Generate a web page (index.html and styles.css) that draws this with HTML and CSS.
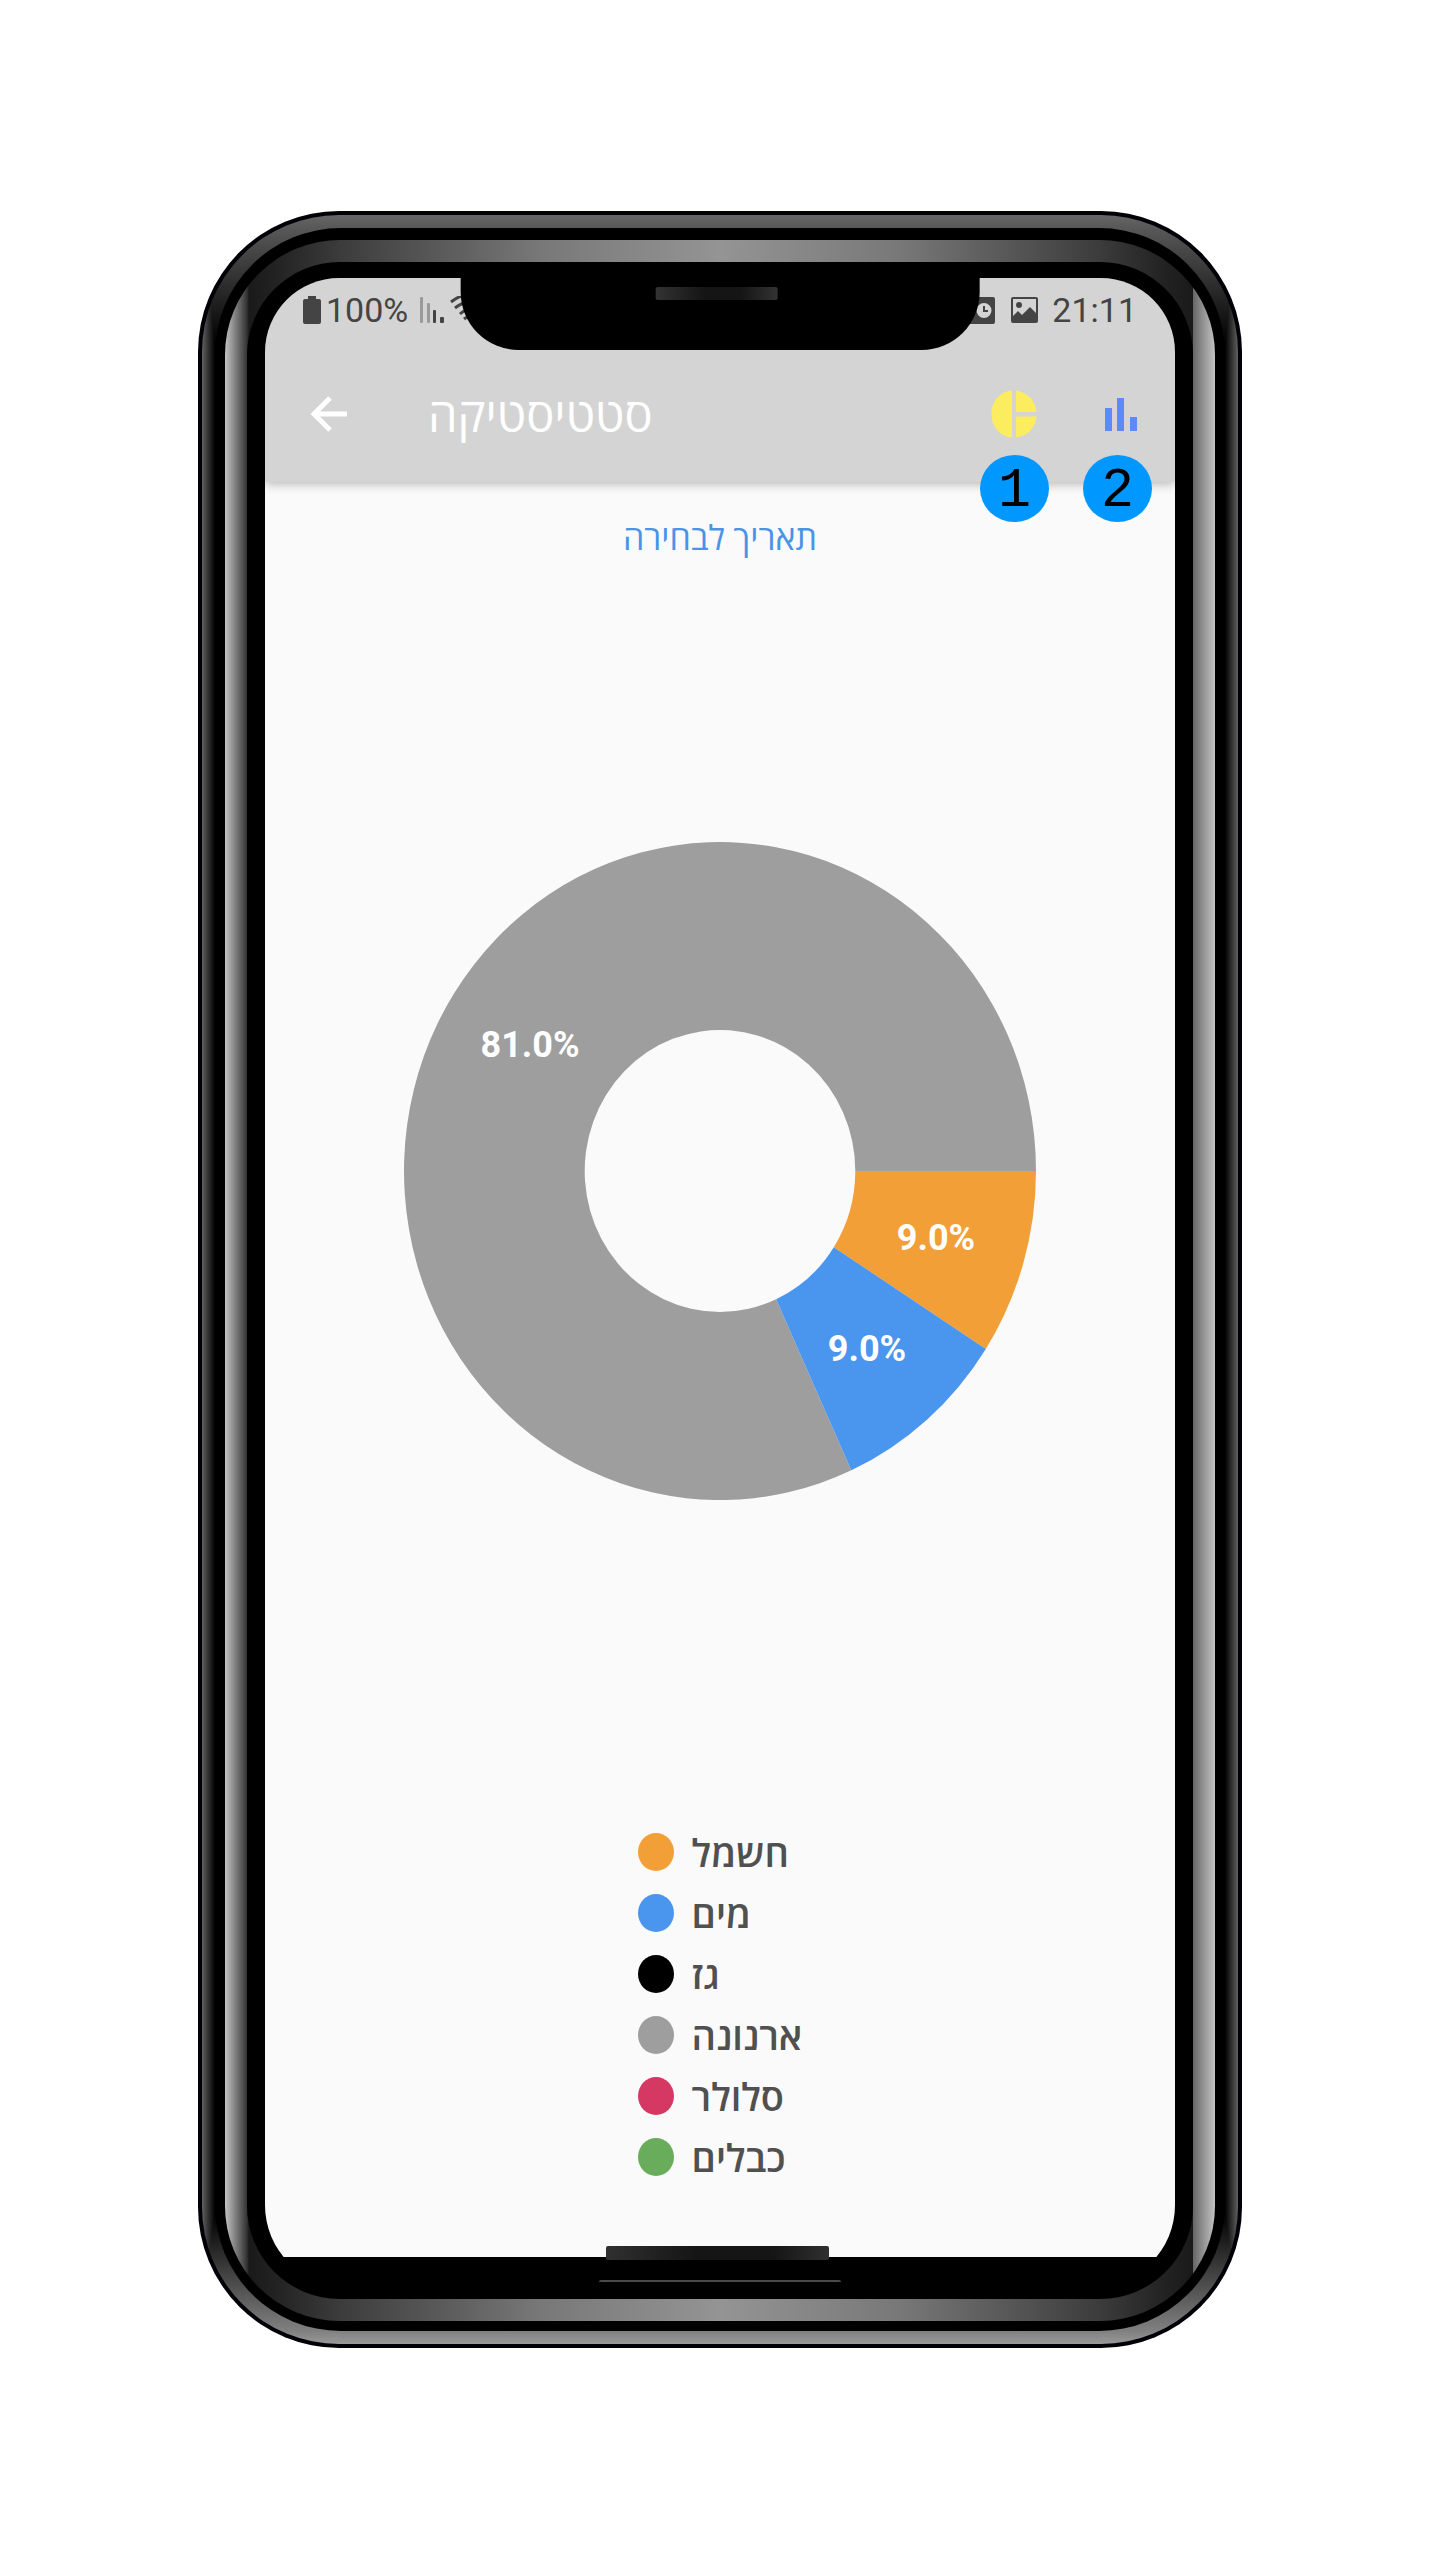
FILE: index.html
```html
<!DOCTYPE html>
<html lang="he">
<head>
<meta charset="utf-8">
<meta name="viewport" content="width=device-width, initial-scale=1">
<title>סטטיסטיקה</title>
<link rel="stylesheet" href="styles.css">
</head>
<body>
<div class="phone">
  <div class="phone-rim">
    <div class="phone-groove">
      <div class="phone-band">
        <div class="phone-bezel">
          <div class="screen">
            <header class="top">
              <div class="status">
                <div class="status-group">
                  <svg class="battery" viewBox="0 0 18 28" aria-hidden="true"><path d="M5 0h8v3h3a2 2 0 0 1 2 2v21a2 2 0 0 1-2 2H2a2 2 0 0 1-2-2V5a2 2 0 0 1 2-2h3z"/></svg>
                  <span class="status-text battery-level">100%</span>
                  <svg class="signal" viewBox="0 0 24 26" aria-hidden="true"><g opacity=".4"><rect width="3" height="26" rx="1"/><rect x="7" y="6" width="3" height="20" rx="1"/></g><rect x="13" y="13" width="3" height="13" rx="1"/><rect x="20" y="20" width="4" height="6" rx="1"/></svg>
                  <svg class="wifi" viewBox="0 0 40 28" aria-hidden="true"><g fill="none" stroke="#444" stroke-width="3"><path d="M1 6Q20-9 39 6"/><path d="M5 12Q20 0 35 12"/><path d="M10 18Q20 9 30 18"/><path d="M14 23Q20 18 26 23"/></g></svg>
                </div>
                <div class="status-group">
                  <svg class="alarm" viewBox="0 0 27 27" aria-hidden="true"><path fill-rule="evenodd" d="M2 0h23a2 2 0 0 1 2 2v23a2 2 0 0 1-2 2H2a2 2 0 0 1-2-2V2a2 2 0 0 1 2-2zm14 6a7 7 0 1 0 0 15 7 7 0 0 0 0-15z"/><path d="M15 9h2v4h3v2h-5z"/></svg>
                  <svg class="photo" viewBox="0 0 27 26" aria-hidden="true"><path fill-rule="evenodd" d="M2 0h23a2 2 0 0 1 2 2v22a2 2 0 0 1-2 2H2a2 2 0 0 1-2-2V2a2 2 0 0 1 2-2zm0 2v17l5-5 4 4 8-8 6 6V2z"/><circle cx="8" cy="8" r="3"/></svg>
                  <span class="status-text">21:11</span>
                </div>
              </div>
              <div class="toolbar">
                <button class="icon-button" type="button" aria-label="חזרה">
                  <svg viewBox="0 0 54 54"><path d="M29 11 13 27l16 16M13 27h33" fill="none" stroke="#fff" stroke-width="5"/></svg>
                </button>
                <h1 class="title" dir="rtl">סטטיסטיקה</h1>
                <div class="actions">
                  <button class="icon-button" type="button" aria-label="תרשים עוגה">
                    <svg viewBox="0 0 54 54"><path fill="#fced60" d="M25 3.500v47C13 49.500 4.500 39.500 4.500 27S13 4.500 25 3.500zM29 3.500c11 1.500 19.500 10 20.500 21.500H29zM29 29.500h20.500C48.500 41 40 49.500 29 50.500z"/></svg>
                    <span class="badge">1</span>
                  </button>
                  <button class="icon-button" type="button" aria-label="תרשים עמודות">
                    <svg viewBox="0 0 54 54"><path fill="#5a8bf8" d="M15 21h7v23h-7zM27 11h7v33h-7zM40 30h7v14h-7z"/></svg>
                    <span class="badge">2</span>
                  </button>
                </div>
              </div>
            </header>
            <main class="content">
              <button class="date" type="button" dir="rtl">תאריך לבחירה</button>
              <svg class="chart" viewBox="0 0 632 658" role="img" aria-label="81.0%, 9.0%, 9.0%">
                <path fill="#9e9e9e" d="M632 329A316 329 0 1 0 447.300 628.300L372.100 457.300A135.300 141 0 1 1 451.300 329z"/>
                <path fill="#f29f38" d="M632 329A316 329 0 0 1 581.800 506.900L429.800 405.200A135.300 141 0 0 0 451.300 329z"/>
                <path fill="#4a95ed" d="M581.800 506.900A316 329 0 0 1 447.300 628.300L372.100 457.300A135.300 141 0 0 0 429.800 405.200z"/>
                <g class="chart-label">
                  <text x="126" y="215">81.0%</text>
                  <text x="532" y="408">9.0%</text>
                  <text x="463" y="519">9.0%</text>
                </g>
              </svg>
              <ul class="legend">
                <li><span class="dot electricity"></span><span class="legend-name" dir="rtl">חשמל</span></li>
                <li><span class="dot water"></span><span class="legend-name" dir="rtl">מים</span></li>
                <li><span class="dot gas"></span><span class="legend-name" dir="rtl">גז</span></li>
                <li><span class="dot tax"></span><span class="legend-name" dir="rtl">ארנונה</span></li>
                <li><span class="dot cellular"></span><span class="legend-name" dir="rtl">סלולר</span></li>
                <li><span class="dot cable"></span><span class="legend-name" dir="rtl">כבלים</span></li>
              </ul>
            </main>
            <div class="notch"><span class="speaker"></span></div>
            <div class="home-bar"></div>
            <div class="home-line"></div>
          </div>
        </div>
      </div>
    </div>
  </div>
</div>
</body>
</html>
```
FILE: styles.css
```css
* { box-sizing: border-box; }

body {
  margin: 0;
  padding: 211px 16px;
  background: #fff;
  font-family: Roboto, "Open Sans", "Noto Sans", sans-serif;
}

button {
  padding: 0;
  border: 0;
  background: none;
  font: inherit;
  cursor: pointer;
}

svg { display: block; }

/* Device frame: nested shells, from the outer edge inwards */
.phone {
  max-width: 1044px;
  margin: 0 auto;
  padding: 4px;
  border-radius: 141px;
  background: #000006;
}

.phone-rim {
  padding: 13px;
  border-radius: 137px;
  background:
    linear-gradient(to right, #606060, #000 13px, #000 calc(100% - 13px), #606060),
    linear-gradient(#666, #585858 13px, #000 130px, #000 calc(100% - 130px), #808080 calc(100% - 13px), #999);
  background-blend-mode: lighten;
}

.phone-groove {
  padding: 12px 10px 10px;
  border-radius: 126px;
  background: #000;
}

.phone-band {
  padding: 22px;
  border-radius: 115px;
  background: linear-gradient(to right,
    #c4c4c4, #333 22px, #1a1a1a 24px, #222 50px, #3c3c3c 116px, #787878 315px,
    #949494 50%,
    #787878 calc(100% - 315px), #3c3c3c calc(100% - 116px), #222 calc(100% - 50px), #1a1a1a calc(100% - 22px),
    #666 calc(100% - 22px), #c4c4c4);
}

.phone-bezel {
  padding: 16px 18px 12px;
  border-radius: 93px;
  background: #000;
}

.screen {
  position: relative;
  display: flex;
  flex-direction: column;
  overflow: hidden;
  padding-bottom: 30px;
  border-radius: 74px 74px 82px 82px;
  background: #000;
}

.top {
  position: relative;
  z-index: 1;
  background: #d4d4d4;
  box-shadow: 0 2px 10px rgba(0, 0, 0, .28);
}

.status {
  display: flex;
  justify-content: space-between;
  height: 64px;
  padding: 0 38px;
  fill: #444;
}

.status-group {
  display: flex;
  align-items: center;
}

.status-text {
  color: #444;
  font-size: 34px;
  line-height: 40px;
}

.battery { width: 18px; height: 28px; margin-right: 5px; }
.battery-level { margin-right: 12px; }
.signal { width: 24px; height: 26px; margin-right: 6px; }
.wifi { width: 40px; height: 28px; }
.alarm { width: 27px; height: 27px; margin-right: 16px; }
.photo { width: 27px; height: 26px; margin-right: 14px; }

.toolbar {
  display: flex;
  align-items: center;
  height: 140px;
  padding: 4px 31px 0 36px;
}

.icon-button {
  position: relative;
  width: 54px;
  height: 54px;
}

.title {
  margin: 0 auto 0 73px;
  padding-top: 4px;
  color: #fff;
  font-size: 47px;
  font-weight: 400;
  line-height: 56px;
}

.actions {
  display: flex;
  gap: 49px;
}

.badge {
  position: absolute;
  top: 68px;
  left: -7px;
  width: 69px;
  height: 67px;
  border-radius: 50%;
  background: #0098ff;
  color: #000;
  font-family: "Liberation Mono", monospace;
  font-size: 55px;
  line-height: 73px;
  text-align: center;
}

.content {
  display: flex;
  flex-direction: column;
  align-items: center;
  padding: 32px 0 70px;
  background: #fafafa;
}

.date {
  color: #4a94e6;
  font-size: 34px;
  line-height: 48px;
}

.chart {
  width: 70%;
  max-width: 632px;
  margin-top: 280px;
}

.chart-label {
  fill: #fff;
  font-size: 36px;
  font-weight: 700;
  text-anchor: middle;
}

.legend {
  margin: 321px 0 0;
  padding: 0;
  list-style: none;
  color: #505050;
  font-size: 38px;
  font-weight: 600;
  line-height: 56px;
}

.legend li {
  display: flex;
  align-items: center;
  gap: 18px;
  height: 61px;
}

.legend-name { padding-top: 4px; }

.dot {
  width: 36px;
  height: 38px;
  border-radius: 50%;
}

.electricity { background: #f29f38; }
.water { background: #4a95ed; }
.gas { background: #000; }
.tax { background: #9e9e9e; }
.cellular { background: #d63864; }
.cable { background: #69ad5c; }

/* Hardware parts that lie over the display */
.notch {
  position: absolute;
  z-index: 2;
  top: 0;
  left: 50%;
  display: flex;
  justify-content: center;
  width: 57%;
  height: 72px;
  padding: 9px 7px 0 0;
  border-radius: 0 0 58px 58px;
  background: #000;
  transform: translateX(-50%);
}

.speaker {
  width: 122px;
  height: 13px;
  border-radius: 2px;
  background: linear-gradient(to right, #333, #151515 40%, #151515 70%, #333);
}

.home-bar {
  position: absolute;
  bottom: 27px;
  left: calc(50% - 114px);
  width: 223px;
  height: 14px;
  border-radius: 2px;
  background: linear-gradient(to right, #303030, #151515 40%, #151515 75%, #303030);
}

.home-line {
  position: absolute;
  bottom: 5px;
  left: calc(50% - 121px);
  width: 242px;
  height: 2px;
  border-radius: 2px 2px 0 0;
  background: #4a4a4a;
}
```
